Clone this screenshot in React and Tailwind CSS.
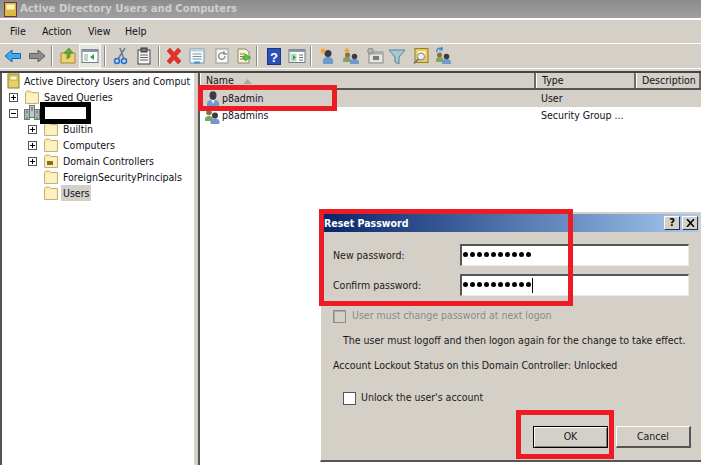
const Folder = ({ inner }) => (
  <svg width="16" height="16" viewBox="0 0 16 16" className="shrink-0">
    <path d="M1.500 14.500V3.500L3 2h3.500L8 3.500h6.500v11z" fill="#fbe9a8" stroke="#c4b078" />
    <path d="M2.500 13.500V5h11v8.500z" fill="#fdf1bf" />
    {inner && <rect x="4" y="8" width="6" height="4" fill="#8a6d1e" />}
  </svg>
);

const Expander = ({ minus }) => (
  <span className="w-[9px] h-[9px] border border-[#555] bg-white relative shrink-0 block">
    <span className="absolute left-[1px] top-[3px] w-[5px] h-px bg-black" />
    {!minus && <span className="absolute left-[3px] top-[1px] w-px h-[5px] bg-black" />}
  </span>
);

const Snapin = () => (
  <svg width="14" height="16" viewBox="0 0 14 16" className="shrink-0">
    <rect x="1" y="1" width="11" height="14" fill="#e8cf68" stroke="#8f7a2a" />
    <rect x="3" y="3" width="7" height="4" fill="#fff6c0" stroke="#a08a38" strokeWidth="0.600" />
  </svg>
);

const Server = () => (
  <svg width="16" height="16" viewBox="0 0 16 16" className="shrink-0">
    <rect x="5.500" y="0.500" width="5" height="12" fill="#c0c8c8" stroke="#6f7878" />
    <rect x="0.500" y="4.500" width="5" height="10" fill="#aab4b4" stroke="#6f7878" />
    <rect x="10.500" y="4.500" width="5" height="10" fill="#aab4b4" stroke="#6f7878" />
    <rect x="2" y="12" width="2" height="2" fill="#3fc03f" />
    <rect x="12" y="12" width="2" height="2" fill="#3fc03f" />
    <path d="M7 3h2M7 5h2M2 7h2M12 7h2" stroke="#555" />
  </svg>
);

const UserIcon = () => (
  <svg width="16" height="16" viewBox="0 0 16 16" className="shrink-0">
    <path d="M2 16v-3c0-3 2.500-4.500 6-4.500s6 1.500 6 4.500v3z" fill="#6d9ad0" />
    <path d="M6 9l2 4 2-4z" fill="#dfe9f5" />
    <ellipse cx="8" cy="4.500" rx="3.500" ry="4.200" fill="#3e3a44" />
  </svg>
);

const GroupIcon = () => (
  <svg width="16" height="16" viewBox="0 0 16 16" className="shrink-0">
    <path d="M0 13v-2c0-2 1.500-3 4-3s4 1 4 3v2z" fill="#79a95e" />
    <circle cx="4" cy="4.500" r="2.800" fill="#8a6f48" />
    <path d="M5.500 16v-2c0-2 1.500-3.500 4.500-3.500s4.500 1.500 4.500 3.500v2z" fill="#6d9ad0" />
    <circle cx="10" cy="7.500" r="3" fill="#3e3a44" />
  </svg>
);

const Sep = () => <span className="w-[2px] h-5 bg-[#8d8b85] border-r border-white mx-[3px] shrink-0" />;

const T = ({ w = 24, children, pressed }) => (
  <span className={`h-6 flex items-center justify-center shrink-0 ${pressed ? "bg-[#e8e6e0] border border-[#f4f4f2]" : ""}`} style={{ width: w }}>
    {children}
  </span>
);

const S = ({ children }) => (
  <svg width="18" height="18" viewBox="0 0 18 18">{children}</svg>
);

const Toolbar = () => (
  <div className="h-6 flex items-center pl-[1px] shrink-0">
    <T w={24}>
      <S><path d="M1 9l7-6v3.500h8.500v5H8V15z" fill="#3fa7ec" stroke="#1566b0" /></S>
    </T>
    <T w={23}>
      <S><path d="M17 9l-7-6v3.500H1.500v5H10V15z" fill="#8c8c8c" stroke="#5f5f5f" /></S>
    </T>
    <Sep />
    <T w={23}>
      <S>
        <path d="M2 16V6h14v10z" fill="#f0d070" stroke="#a88a30" />
        <path d="M8 12V6H5l5-5 4 5h-3v4z" fill="#5fae3a" stroke="#3a7e1e" strokeWidth="0.600" />
      </S>
    </T>
    <T w={22} pressed>
      <S>
        <rect x="1" y="2.500" width="16" height="13" fill="#fff" stroke="#6e7b88" />
        <rect x="1" y="2.500" width="16" height="2.500" fill="#8597a8" />
        <rect x="3" y="7" width="4" height="7" fill="#bcd8c2" />
        <path d="M13 7v6l-4-3z" fill="#2f9e4a" />
      </S>
    </T>
    <Sep />
    <T w={24}>
      <S>
        <path d="M13 1L6 12M8 1l4 11" stroke="#6e7b88" strokeWidth="1.500" fill="none" />
        <circle cx="5" cy="14" r="2.500" fill="none" stroke="#1e73d8" strokeWidth="1.500" />
        <circle cx="12" cy="14" r="2.500" fill="none" stroke="#1e73d8" strokeWidth="1.500" />
      </S>
    </T>
    <T w={22}>
      <S>
        <rect x="3" y="3" width="12" height="14" fill="#f4f4f2" stroke="#444" />
        <rect x="6" y="1" width="6" height="4" fill="#777" stroke="#333" />
        <path d="M5 8h8M5 10.500h8M5 13h8" stroke="#666" />
      </S>
    </T>
    <Sep />
    <T w={22}>
      <S><path d="M2 4l3-3 4 4.500L13 1l3 3-4.500 5 4.500 5-3 3-4-4.500L5 17l-3-3 4.500-5z" fill="#e8302c" stroke="#b3201d" strokeWidth="0.500" /></S>
    </T>
    <T w={24}>
      <S>
        <rect x="2" y="2" width="14" height="14" fill="#f6fafc" stroke="#7d94a8" />
        <rect x="2" y="2" width="14" height="2.500" fill="#bcd0de" />
        <path d="M4.500 7h9M4.500 9.500h9M4.500 12h9" stroke="#8090a0" />
        <rect x="6" y="14.500" width="6" height="2" fill="#2a9fd6" />
      </S>
    </T>
    <T w={26}>
      <S>
        <rect x="3" y="2" width="12" height="14" fill="#f8f8f6" stroke="#9a9a96" />
        <path d="M12 9a3.200 3.200 0 1 1-1-2.300M11 4v3h3" fill="none" stroke="#8a8a88" strokeWidth="1.300" />
      </S>
    </T>
    <T w={18}>
      <S>
        <path d="M3 2h8l3 3v11H3z" fill="#fbf4cf" stroke="#8a8a70" />
        <path d="M5 7h5M5 9.500h4M5 12h5" stroke="#776" />
        <path d="M10 9v-2l6 3.500-6 3.500v-2H8v-3z" fill="#58c040" stroke="#2e8a22" strokeWidth="0.500" />
      </S>
    </T>
    <Sep />
    <T w={26}>
      <svg width="14" height="17" viewBox="0 0 14 17">
        <rect x="0.500" y="0.500" width="13" height="16" fill="#2b4fb8" stroke="#1c3484" />
        <text x="7" y="13.500" textAnchor="middle" fill="#fff" fontSize="13" fontWeight="700" fontFamily="Liberation Sans, sans-serif">?</text>
      </svg>
    </T>
    <T w={20}>
      <S>
        <rect x="1" y="2.500" width="16" height="13" fill="#fff" stroke="#6e7b88" />
        <rect x="1" y="2.500" width="16" height="2.500" fill="#8597a8" />
        <rect x="2.500" y="6.500" width="6" height="8" fill="#bcd8c2" />
        <path d="M5 8v5l3-2.500z" fill="#2f9e4a" />
        <path d="M11 8h4M11 10.500h4M11 13h4" stroke="#667" />
      </S>
    </T>
    <Sep />
    <T w={26}>
      <S>
        <path d="M4 17v-3c0-3 2-4 5-4s5 1 5 4v3z" fill="#6d9ad0" />
        <circle cx="9" cy="6.500" r="3.500" fill="#3e3a44" />
        <path d="M4 1v6M1 4h6M2 2l4 4M6 2l-4 4" stroke="#f0a020" />
      </S>
    </T>
    <T w={22}>
      <S>
        <path d="M0 15v-2c0-2 1.500-3 4-3s4 1 4 3v2z" fill="#79a95e" />
        <circle cx="4.500" cy="8" r="2.500" fill="#8a6f48" />
        <path d="M7 17v-2c0-2 2-3 4.500-3s4.500 1 4.500 3v2z" fill="#6d9ad0" />
        <circle cx="11.500" cy="9.500" r="2.800" fill="#3e3a44" />
        <path d="M4 1v5M1.500 3.500h5M2.200 1.700l3.600 3.600M5.800 1.700l-3.600 3.600" stroke="#f0a020" />
      </S>
    </T>
    <T w={24}>
      <S>
        <rect x="3" y="5" width="14" height="11" fill="#e4e4e0" stroke="#8a8a86" />
        <rect x="3" y="5" width="14" height="2.500" fill="#aaa" />
        <rect x="7" y="9" width="6" height="4" fill="#777" />
        <circle cx="4.500" cy="4" r="2.800" fill="#b4b4b0" stroke="#8a8a86" />
      </S>
    </T>
    <T w={20}>
      <S><path d="M1 3h16l-6 7v7l-4-2v-5z" fill="#a8c8d8" stroke="#5a7f94" /></S>
    </T>
    <T w={28}>
      <S>
        <rect x="3" y="1.500" width="13" height="14" fill="#e8c860" stroke="#9a7e20" />
        <rect x="5.500" y="4" width="8" height="5" fill="#fff3b8" />
        <circle cx="9" cy="9.500" r="3.500" fill="#e8eef2" stroke="#7a8a94" />
        <path d="M6.500 12L2 16.500" stroke="#667" strokeWidth="1.500" />
      </S>
    </T>
    <T w={18}>
      <S>
        <path d="M1 15v-2c0-2 1.500-3 3.500-3s4 1 4 3v2z" fill="#79a95e" />
        <circle cx="4.500" cy="8" r="2.500" fill="#8a6f48" />
        <path d="M7 17v-2c0-2 2-3 4.500-3s4.500 1 4.500 3v2z" fill="#6d9ad0" />
        <circle cx="11.500" cy="9.500" r="2.800" fill="#3e3a44" />
        <path d="M2 5a3 3 0 0 1 5-3M7 0v3H4" fill="none" stroke="#2080d0" strokeWidth="1.200" />
      </S>
    </T>
  </div>
);

const TreeRow = ({ indent, exp, noExp, minus, icon, children, sel }) => (
  <div className="h-4 flex items-center whitespace-nowrap shrink-0" style={{ paddingLeft: indent }}>
    {!noExp && <span className="w-[15px] shrink-0 flex">{exp && <Expander minus={minus} />}</span>}
    {icon}
    <span className={`ml-[2px] px-[2px] h-4 leading-4 ${sel ? "bg-[#d4d0c8]" : ""}`}>{children}</span>
  </div>
);

const HeaderCell = ({ w, children }) => (
  <div className="h-[15px] flex items-center pl-[5px] pt-[1px] border-l border-white border-r-2 border-r-[#6d6a64] shrink-0 overflow-hidden whitespace-nowrap" style={{ width: w }}>
    {children}
  </div>
);

const Dots = () => (
  <span className="flex gap-[2px] items-center">
    {Array.from({ length: 10 }).map((_, i) => (
      <span key={i} className="w-[5px] h-[5px] rounded-full bg-black block" />
    ))}
  </span>
);

const PwdRow = ({ label, caret }) => (
  <div className="flex items-center h-[22px]">
    <span className="w-[127px] shrink-0 pt-[1px]">{label}</span>
    <span className="w-[229px] h-[22px] bg-white border-t-2 border-l-2 border-t-[#555] border-l-[#555] border-r border-b border-r-[#ece9e2] border-b-[#ece9e2] flex items-center pl-[1px] pb-[3px]">
      <Dots />
      {caret && <span className="w-px h-[15px] bg-black ml-px mt-[3px]" />}
    </span>
  </div>
);

const Btn = ({ children, def }) => (
  <span className={`w-[75px] h-[22px] flex items-center justify-center bg-[#d4d0c8] ${def ? "border border-black shadow-[inset_1px_1px_0_#fff,inset_-1px_-1px_0_#808080]" : "border-t border-l border-white border-r-2 border-b-2 border-r-[#555] border-b-[#555]"}`}>
    {children}
  </span>
);

const Dialog = () => (
  <div className="absolute left-[320px] top-[211px] w-[381px] h-[251px] bg-[#d4d0c8] border-t border-l border-white border-b-2 border-b-[#555] flex flex-col text-[#1a1a1a]">
    <div className="mt-[2px] ml-[2px] mr-[2px] h-[18px] flex items-center bg-gradient-to-r from-[#0a246a] to-[#a6caf0] shrink-0">
      <span className="text-white font-bold pl-[1px] pt-[1px] flex-1">Reset Password</span>
      <span className="w-4 h-[14px] bg-[#d4d0c8] border-t border-l border-white border-r border-b border-r-[#333] border-b-[#333] flex items-center justify-center font-bold text-black text-[11px] mr-[2px]">?</span>
      <span className="w-4 h-[14px] bg-[#d4d0c8] border-t border-l border-white border-r border-b border-r-[#333] border-b-[#333] flex items-center justify-center mr-[1px]">
        <svg width="9" height="8" viewBox="0 0 9 8"><path d="M1 0l7 8M8 0L1 8" stroke="#000" strokeWidth="1.500" /></svg>
      </span>
    </div>
    <div className="pl-[12px] pt-[12px] flex flex-col gap-[8px]">
      <PwdRow label="New password:" />
      <PwdRow label="Confirm password:" caret />
    </div>
    <div className="pl-[12px] mt-[13px] flex items-center h-[14px] text-[#8d8b86]">
      <span className="w-[13px] h-[13px] border border-[#8d8b86] shadow-[inset_1px_1px_0_#aaa] mr-[6px]" />
      User must change password at next logon
    </div>
    <div className="pl-[22px] mt-[9px] h-[16px] leading-4 whitespace-nowrap">The user must logoff and then logon again for the change to take effect.</div>
    <div className="pl-[12px] mt-[9px] h-[16px] leading-4 whitespace-nowrap">Account Lockout Status on this Domain Controller: Unlocked</div>
    <div className="pl-[22px] mt-[18px] flex items-center h-[14px]">
      <span className="w-[13px] h-[13px] bg-white border border-[#555] mr-[5px]" />
      Unlock the user's account
    </div>
    <div className="flex justify-end gap-[8px] mt-[21px] pr-[10px]">
      <Btn def>OK</Btn>
      <Btn>Cancel</Btn>
    </div>
  </div>
);

export default function App() {
  return (
    <div className="w-[701px] h-[465px] relative overflow-hidden bg-[#d4d0c8] text-[10.5px] text-[#101020] font-['DejaVu_Sans_Condensed','DejaVu_Sans',sans-serif] flex flex-col">
      <div className="h-[18px] bg-gradient-to-b from-[#8c8c8c] to-[#a0a0a0] flex items-center pl-[4px] gap-[1px] shrink-0">
        <svg width="14" height="15" viewBox="0 0 14 15" className="shrink-0">
          <rect x="0.500" y="0.500" width="12" height="14" fill="#d9bb3f" stroke="#7a2f3f" />
          <rect x="2.500" y="2.500" width="8" height="5" fill="#fff5b8" />
        </svg>
        <span className="font-bold text-[#cfcfcf] text-[11.2px] ml-[1px] whitespace-nowrap">Active Directory Users and Computers</span>
      </div>
      <div className="h-[2px] bg-white shrink-0" />
      <div className="h-[23px] flex items-center pl-[10px] shrink-0">
        <span className="w-[32px]">File</span>
        <span className="w-[46px]">Action</span>
        <span className="w-[37px]">View</span>
        <span>Help</span>
      </div>
      <div className="h-px bg-white shrink-0" />
      <Toolbar />
      <div className="h-px bg-white shrink-0" />
      <div className="h-[2px] shrink-0" />
      <div className="h-[2px] bg-[#444] shrink-0" />
      <div className="flex-1 flex min-h-0">
        <div className="w-[195px] bg-white border-r border-[#d8d8d0] border-l-2 border-l-[#555] overflow-hidden shrink-0 flex flex-col">
          <TreeRow indent={5} noExp icon={<Snapin />}><span className="-ml-[1px]">Active Directory Users and Comput</span></TreeRow>
          <TreeRow indent={7} exp icon={<Folder />}>Saved Queries</TreeRow>
          <TreeRow indent={7} exp minus icon={<Server />}>&nbsp;</TreeRow>
          <TreeRow indent={26} exp icon={<Folder />}>Builtin</TreeRow>
          <TreeRow indent={26} exp icon={<Folder />}>Computers</TreeRow>
          <TreeRow indent={26} exp icon={<Folder inner />}>Domain Controllers</TreeRow>
          <TreeRow indent={26} icon={<Folder />}>ForeignSecurityPrincipals</TreeRow>
          <TreeRow indent={26} icon={<Folder />} sel>Users</TreeRow>
        </div>
        <div className="w-[3px] shrink-0" />
        <div className="flex-1 bg-white border-l-2 border-[#555] flex flex-col min-w-0">
          <div className="flex bg-[#d4d0c8] border-b-2 border-[#555] shrink-0">
            <HeaderCell w={336}>
              <span>Name</span>
              <svg width="9" height="5" viewBox="0 0 9 5" className="ml-[9px]"><path d="M0 5l4.500-5L9 5z" fill="#aaa8a2" /></svg>
            </HeaderCell>
            <HeaderCell w={100}>Type</HeaderCell>
            <HeaderCell w={65}>Description</HeaderCell>
          </div>
          <div className="h-[17px] flex items-center bg-[#d4d0c8] pl-[5px] pt-[1px] shrink-0">
            <UserIcon />
            <span className="ml-[1px] w-[319px]">p8admin</span>
            <span>User</span>
          </div>
          <div className="h-[17px] flex items-center pl-[5px] pt-[1px] shrink-0">
            <GroupIcon />
            <span className="ml-[1px] w-[319px]">p8admins</span>
            <span>Security Group ...</span>
          </div>
        </div>
      </div>
      <Dialog />
      <div className="absolute left-[319px] top-[209px] w-[254px] h-[97px] border-[5px] border-[#ed1c24]" />
      <div className="absolute left-[516px] top-[410px] w-[98px] h-[49px] border-[5px] border-[#ed1c24]" />
      <div className="absolute left-[198px] top-[85px] w-[139px] h-[26px] border-[5px] border-[#ed1c24]" />
      <div className="absolute left-[40px] top-[102px] w-[51px] h-[22px] border-[5px] border-black bg-white" />
    </div>
  );
}
